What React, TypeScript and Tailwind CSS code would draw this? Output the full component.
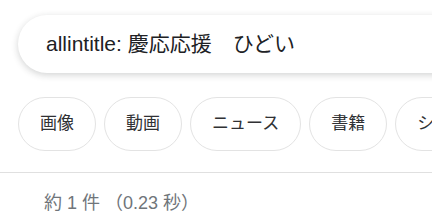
const chips = ["画像", "動画", "ニュース", "書籍", "ショッピング"];

export default function App() {
  return (
    <div
      className="w-[432px] h-[220px] overflow-hidden bg-white"
      style={{ fontFamily: '"Liberation Sans", Arial, "Noto Sans CJK JP", sans-serif' }}
    >
      {/* search box */}
      <div className="pt-[15px] pl-[18px]">
        <div className="w-[460px] h-[58px] rounded-full bg-white shadow-[0_2px_7px_rgba(32,33,36,0.2)] flex items-center pl-[28px]">
          <span className="text-[21px] text-[#202124] whitespace-nowrap">allintitle: 慶応応援　ひどい</span>
        </div>
      </div>

      {/* chips */}
      <div className="mt-[24px] pl-[18px] flex gap-[8px] whitespace-nowrap overflow-hidden">
        {chips.map((c) => (
          <div
            key={c}
            className="shrink-0 h-[54px] px-[21px] rounded-full border border-[#e3e3e3] flex items-center text-[17px] text-[#303134]"
          >
            {c}
          </div>
        ))}
      </div>

      {/* divider */}
      <div className="mt-[21px] h-px bg-[#e0e0e0]" />

      <div className="pl-[44px] pt-[17px] text-[18px] text-[#70757a] whitespace-nowrap">
        約 1 件 （0.23 秒）
      </div>
    </div>
  );
}
